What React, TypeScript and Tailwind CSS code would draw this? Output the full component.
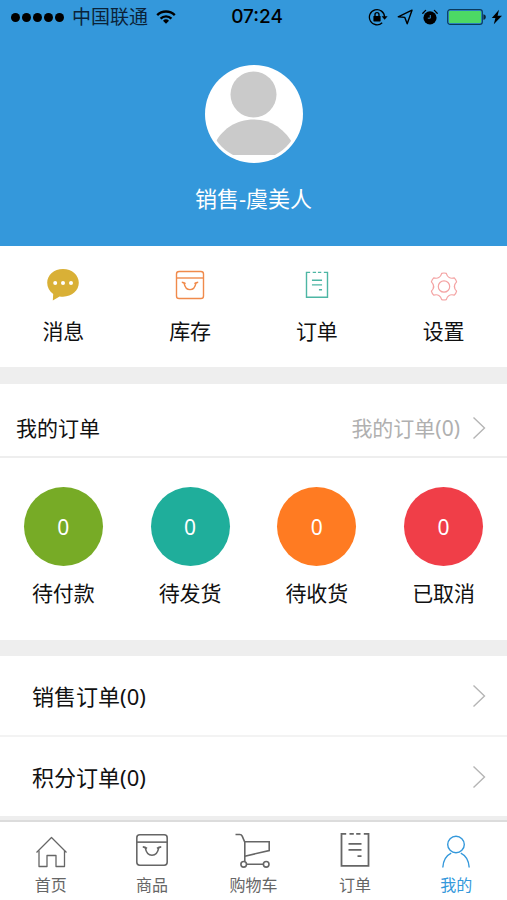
import { ReactNode } from 'react';
import clsx from 'clsx';

type IconProps = { className?: string };

const WifiIcon = () => (
  <svg className="h-4 w-5" viewBox="0 0 20 16" fill="none" stroke="currentColor" strokeWidth="2.4">
    <path d="M1.2 6.2a12.4 12.4 0 0 1 17.6 0" />
    <path d="M4.6 9.6a7.6 7.6 0 0 1 10.8 0" />
    <path d="M10 14.8 7 11.8a4.3 4.3 0 0 1 6 0Z" fill="currentColor" stroke="none" />
  </svg>
);

const RotationLockIcon = () => (
  <svg className="h-5 w-5" viewBox="0 0 20 20" fill="none" stroke="currentColor" strokeWidth="1.3">
    <path d="M14.2 15.8A7.6 7.6 0 1 1 16.6 10" />
    <path d="M13.6 9.2h6l-3 3.6Z" fill="currentColor" stroke="none" />
    <rect x="5.4" y="9" width="7.2" height="5.4" rx="0.6" fill="currentColor" stroke="none" />
    <path d="M7 9.4V7.6a2 2 0 0 1 4 0v1.8" strokeWidth="1.4" />
  </svg>
);

const LocationIcon = () => (
  <svg className="h-4 w-4" viewBox="0 0 16 16" fill="none" stroke="currentColor" strokeWidth="1.4">
    <path d="M15 1.2 1.2 7.8l6.600.600 2.400 6.400Z" strokeLinejoin="round" />
  </svg>
);

const AlarmIcon = () => (
  <svg className="h-4 w-4" viewBox="0 0 16 16" fill="none">
    <circle cx="8" cy="8.8" r="6.6" fill="currentColor" />
    <path d="M.8 4.2 3.6 1.4M15.2 4.2l-2.8-2.8" stroke="currentColor" strokeWidth="1.3" strokeLinecap="round" />
    <path d="M8.3 6v3.200H5.800" stroke="#3498db" strokeWidth="0.9" />
  </svg>
);

const BatteryIcon = () => (
  <svg className="h-4 w-10" viewBox="0 0 40 16" fill="none">
    <rect x="0.7" y="0.7" width="34.6" height="14.6" rx="2.4" stroke="#0b3a5c" strokeWidth="1.2" />
    <rect x="2" y="2" width="32" height="12" rx="1.2" fill="#4cd964" />
    <path d="M36.4 5.2c1.8.4 2.4 1.4 2.4 2.8s-.6 2.4-2.4 2.8Z" fill="#0b2338" />
  </svg>
);

const BoltIcon = () => (
  <svg className="h-4 w-3" viewBox="0 0 12 16" fill="currentColor">
    <path d="M8 .8.800 9h3.600l-1.600 6.200L11 6.800H6.600Z" />
  </svg>
);

const AvatarIcon = ({ className }: IconProps) => (
  <svg className={className} viewBox="0 0 98 98">
    <clipPath id="avatar-clip">
      <circle cx="49" cy="49" r="46" />
    </clipPath>
    <circle cx="49" cy="49" r="49" fill="#fff" />
    <circle cx="48.5" cy="29.5" r="23" fill="#cacaca" />
    <path d="M8 90V82C16 64 31 54.5 49 54.5S80 64 90 82v8Z" fill="#cacaca" clipPath="url(#avatar-clip)" />
  </svg>
);

const ChatIcon = ({ className }: IconProps) => (
  <svg className={className} viewBox="0 0 32 32">
    <path
      d="M16 0C7 0 .2 6.2.2 13.8c0 4.6 2.200 8.600 6 11.200l-.4 6.600 6.800-4.200c1.200.2 2.200.3 3.400.3 9 0 15.800-6.200 15.800-13.900S25 0 16 0Z"
      fill="#d9b036"
    />
    <g fill="#fff">
      <circle cx="8.2" cy="14" r="2" />
      <circle cx="16" cy="14" r="2" />
      <circle cx="24" cy="14" r="2" />
    </g>
  </svg>
);

const BagIcon = ({ className }: IconProps) => (
  <svg className={className} viewBox="0 0 32 32" fill="none" stroke="currentColor" strokeWidth="1.4">
    <rect x="2.5" y="2.5" width="27" height="27" rx="2.6" />
    <path d="M2.5 9h27" />
    <path d="M10 13.8c.8 4.4 3 6.800 6 6.800s5.200-2.400 6-6.800" />
    <path d="M7.800 13.200q2 .2 3.800 1.400M24.200 13.200q-2 .2-3.800 1.400" />
  </svg>
);

const OrderIcon = ({ className }: IconProps) => (
  <svg className={className} viewBox="0 0 32 36" fill="none" stroke="currentColor" strokeWidth="1.8">
    <path d="M7.200 1.800H2.500v32h27v-32h-4.700M10.500 1.800h4.300M17.200 1.800h4.300" />
    <path d="M9.500 11.800h13M9.500 17.800h13M18.500 24.200h4" />
  </svg>
);

const GearIcon = ({ className }: IconProps) => (
  <svg className={className} viewBox="0 0 32 32" fill="none" stroke="currentColor" strokeWidth="1.2" strokeLinejoin="round">
    <path d="M13.7 4.3Q16 3.700 18.3 4.3Q20 10.6 26.3 8.9Q28 10.600 28.6 12.9Q24 17.5 28.6 22.1Q28 24.400 26.3 26.1Q20 24.4 18.3 30.7Q16 31.300 13.7 30.7Q12 24.4 5.7 26.1Q4 24.400 3.4 22.1Q8 17.5 3.4 12.9Q4 10.600 5.7 8.9Q12 10.6 13.7 4.3Z" />
    <circle cx="16" cy="17.5" r="5.7" />
  </svg>
);

const HomeIcon = ({ className }: IconProps) => (
  <svg className={className} viewBox="0 0 36 36" fill="none" stroke="currentColor" strokeWidth="1.3" strokeLinejoin="round">
    <path d="M3.500 20.500 18.500 5.500l15 15" />
    <path d="M6 18.500v16h8v-11h9v11h8.500v-16" />
  </svg>
);

const CartIcon = ({ className }: IconProps) => (
  <svg className={className} viewBox="0 0 36 36" fill="none" stroke="currentColor" strokeWidth="1.6">
    <path d="M.5 2.500h4.300q1.700 0 2.400 1.600l2.600 6V29.500" />
    <path d="M9.800 9.800h24.400v8.700L9.800 24.200M11.600 32.300h16.800" />
    <circle cx="8.7" cy="32.3" r="2.8" />
    <circle cx="31.2" cy="32.3" r="2.8" />
  </svg>
);

const UserIcon = ({ className }: IconProps) => (
  <svg className={className} viewBox="0 0 36 36" fill="none" stroke="currentColor" strokeWidth="1.4">
    <circle cx="18" cy="12.5" r="8.3" />
    <path d="M4.800 35.500c.4-6.700 3.700-12 8.400-14.300M31.200 35.500c-.4-6.700-3.700-12-8.400-14.300" />
  </svg>
);

const ChevronIcon = () => (
  <svg className="h-6 w-4" viewBox="0 0 16 24" fill="none" stroke="#b5b5b5" strokeWidth="1.4">
    <path d="M2.500 1.500 13.500 12l-11 10.500" />
  </svg>
);

const shortcuts: { label: string; icon: ReactNode }[] = [
  { label: '消息', icon: <ChatIcon className="h-8 w-8" /> },
  { label: '库存', icon: <BagIcon className="h-8 w-8 text-[#f08a4b]" /> },
  { label: '订单', icon: <OrderIcon className="h-7 w-8 text-[#4db6a4]" /> },
  { label: '设置', icon: <GearIcon className="h-8 w-8 text-[#f4a3a3]" /> },
];

const statuses = [
  { label: '待付款', count: 0, color: 'bg-[#77ab26]' },
  { label: '待发货', count: 0, color: 'bg-[#1fae9b]' },
  { label: '待收货', count: 0, color: 'bg-[#ff7b22]' },
  { label: '已取消', count: 0, color: 'bg-[#f03e48]' },
];

const lists = [
  { label: '销售订单', count: 0 },
  { label: '积分订单', count: 0 },
];

const tabs: { label: string; icon: ReactNode; active?: boolean }[] = [
  { label: '首页', icon: <HomeIcon className="h-9 w-9" /> },
  { label: '商品', icon: <BagIcon className="h-9 w-9" /> },
  { label: '购物车', icon: <CartIcon className="h-9 w-9" /> },
  { label: '订单', icon: <OrderIcon className="h-9 w-9" /> },
  { label: '我的', icon: <UserIcon className="h-9 w-9" />, active: true },
];

const StatusBar = () => (
  <div className="grid h-[34px] grid-cols-[1fr_auto_1fr] items-center pl-[11px] pr-1 text-black">
    <div className="flex items-center">
      <div className="flex gap-[2px]">
        {[0, 1, 2, 3, 4].map((i) => (
          <span key={i} className="h-[9px] w-[9px] rounded-full bg-black" />
        ))}
      </div>
      <span className="mx-2 text-[19px] leading-6 text-[#0b2338]">中国联通</span>
      <WifiIcon />
    </div>
    <span className="font-['Inter','Liberation_Sans',sans-serif] text-[19px] font-medium leading-6">07:24</span>
    <div className="flex items-center justify-end gap-[9px]">
      <RotationLockIcon />
      <LocationIcon />
      <AlarmIcon />
      <span className="flex items-center gap-1">
        <BatteryIcon />
        <BoltIcon />
      </span>
    </div>
  </div>
);

export default function App() {
  return (
    <div className="flex min-h-screen flex-col bg-[#eeeeee] font-['Noto_Sans','Noto_Sans_CJK_SC',sans-serif] text-[21px] leading-8 text-[#111]">
      <header className="bg-[#3498db] pb-8">
        <StatusBar />
        <div className="flex flex-col items-center pt-[31px]">
          <AvatarIcon className="h-[98px] w-[98px]" />
          <h1 className="mt-[19px] text-[22px] text-white">销售-虞美人</h1>
        </div>
      </header>

      <nav className="grid grid-cols-4 bg-white pb-5 pt-[23px]">
        {shortcuts.map(({ label, icon }) => (
          <a key={label} href="#" className="flex flex-col items-center">
            <span className="flex h-8 items-center">{icon}</span>
            <span className="mt-[14px]">{label}</span>
          </a>
        ))}
      </nav>

      <section className="mt-[17px] bg-white">
        <a href="#" className="flex h-[74px] items-center justify-between border-b-2 border-[#eeeeee] pl-4 pr-5 pt-4">
          <h2>我的订单</h2>
          <span className="flex items-center gap-[11px] text-[#b0b0b0]">
            我的订单(0)
            <ChevronIcon />
          </span>
        </a>
        <div className="grid grid-cols-4 pb-[31px] pt-[29px]">
          {statuses.map(({ label, count, color }) => (
            <a key={label} href="#" className="flex flex-col items-center">
              <span className={clsx('flex h-[79px] w-[79px] items-center justify-center rounded-full text-white', color)}>
                {count}
              </span>
              <span className="mt-[11px]">{label}</span>
            </a>
          ))}
        </div>
      </section>

      <section className="mt-4 text-[22px]">
        {lists.map(({ label, count }) => (
          <a
            key={label}
            href="#"
            className="flex h-[81px] items-center justify-between border-b-2 border-[#f3f3f3] bg-white pl-8 pr-5 last:h-[79px] last:border-b-0"
          >
            {label}({count})
            <ChevronIcon />
          </a>
        ))}
      </section>

      <nav className="sticky bottom-0 mt-auto grid grid-cols-5 border-t-2 border-[#dcdcdc] bg-white pb-[3px] pt-[10px] text-base text-[#666]">
        {tabs.map(({ label, icon, active }) => (
          <a key={label} href="#" className={clsx('flex flex-col items-center', active && 'text-[#3498db]')}>
            {icon}
            <span className="mt-[5px] leading-6">{label}</span>
          </a>
        ))}
      </nav>
    </div>
  );
}
